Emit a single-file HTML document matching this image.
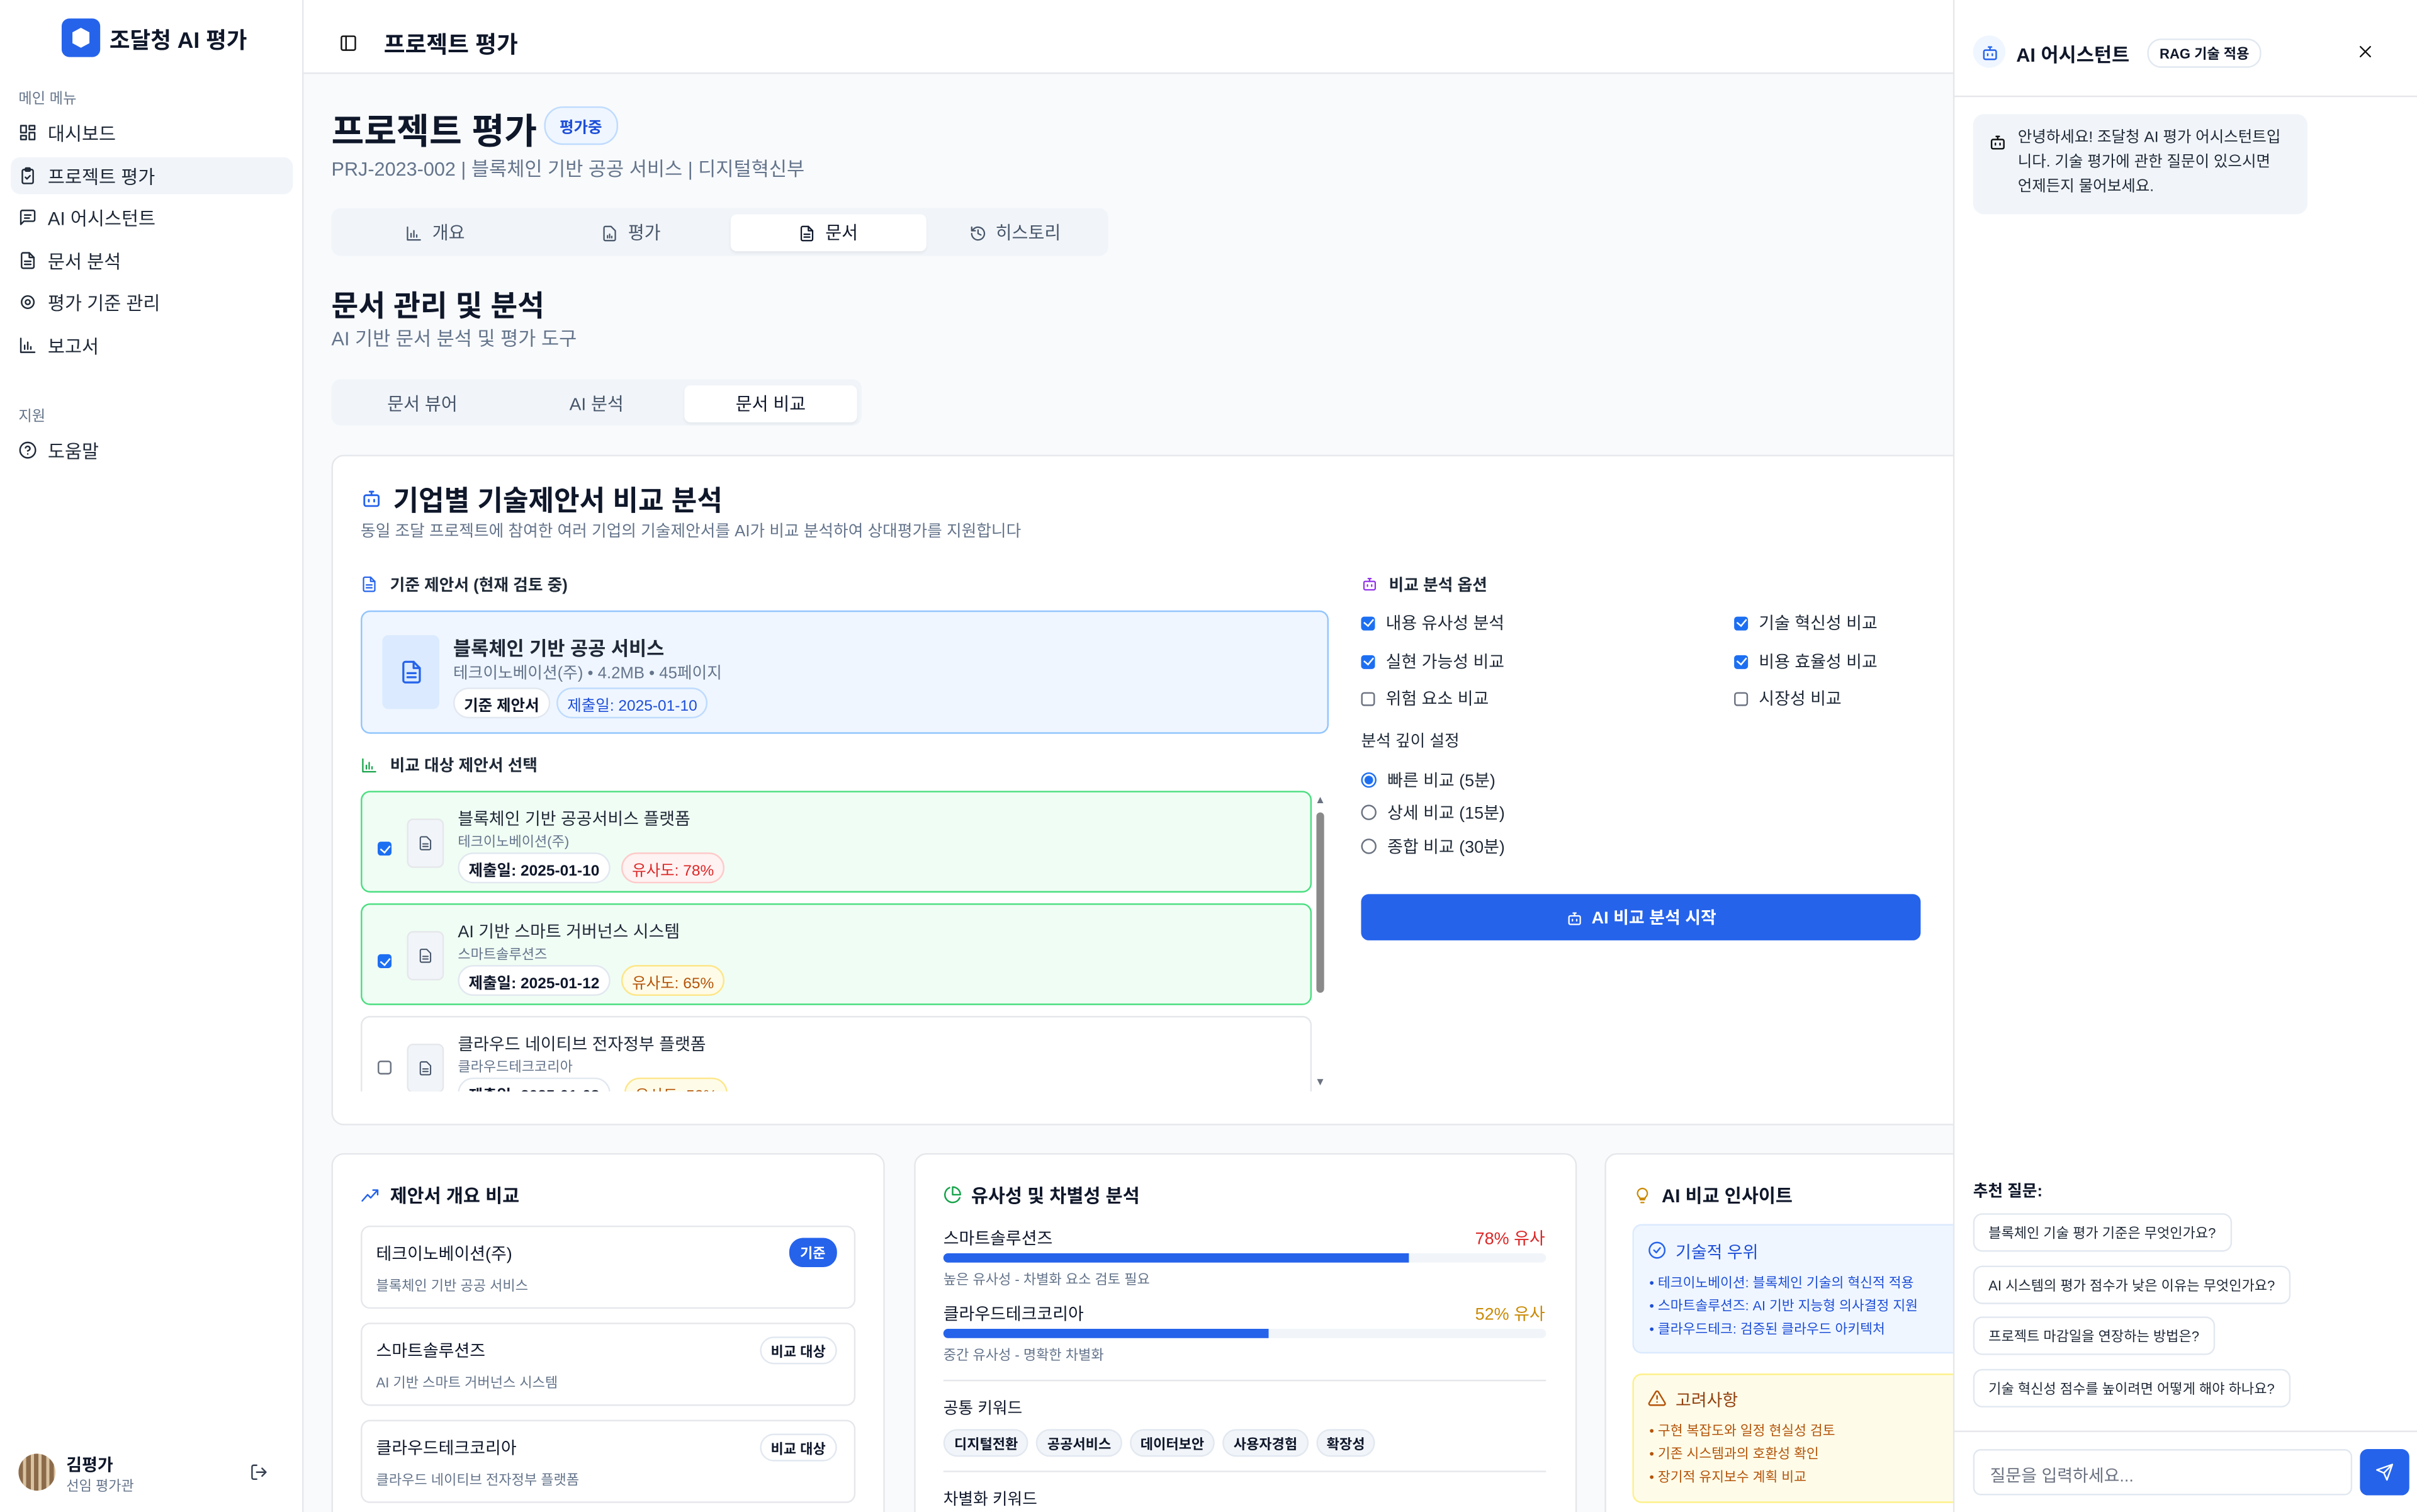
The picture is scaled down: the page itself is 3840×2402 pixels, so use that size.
<!DOCTYPE html>
<html><head><meta charset="utf-8">
<style>
*{box-sizing:border-box;margin:0;padding:0}
html,body{width:3840px;height:2401px;overflow:hidden;background:#f8fafc}
body{font-family:"Liberation Sans","Noto Sans CJK KR",sans-serif;color:#0f172a}
#s{position:absolute;left:0;top:0;width:1568px;height:981px;transform:scale(2.44898);transform-origin:0 0;background:#f8fafc;overflow:hidden}
.a{position:absolute}
svg{display:block}
.ic{fill:none;stroke:currentColor;stroke-width:2;stroke-linecap:round;stroke-linejoin:round}
.side{left:0;top:0;width:197px;height:981px;background:#fff;border-right:1px solid #e5e7eb}
.nav{position:absolute;left:7px;width:183px;height:24px;border-radius:6px;display:flex;align-items:center;padding-left:5px;font-size:12px;color:#1f2937;gap:7px}
.nav.act{background:#f1f5f9}
.lbl{font-size:9.5px;color:#64748b}
.tabs{background:#f1f5f9;border-radius:6px}
.tab{position:absolute;top:4px;height:24px;border-radius:4px;display:flex;align-items:center;justify-content:center;gap:6px;font-size:11.5px;color:#475569}
.tab.on{background:#fff;color:#0f172a;box-shadow:0 1px 2px rgba(0,0,0,.06)}
.card{background:#fff;border:1px solid #e5e7eb;border-radius:8px}
.pill{display:inline-block;font-size:10px;border:1px solid #e2e8f0;border-radius:10px;padding:1.5px 6px;font-weight:bold;background:#fff}
.cb{width:9px;height:9px;border-radius:2px;background:#1d6ff2;display:inline-block;position:relative}
.cb:after{content:"";position:absolute;left:2.8px;top:.8px;width:2.5px;height:5px;border:solid #fff;border-width:0 1.3px 1.3px 0;transform:rotate(40deg)}
.cb0{width:9px;height:9px;border-radius:2px;border:1px solid #6b7280;display:inline-block;background:#fff}
.opt{position:absolute;font-size:11px;display:flex;align-items:center;gap:7px;color:#1f2937}
.rd{width:10px;height:10px;border-radius:50%;border:1px solid #6b7280;display:inline-block;background:#fff}
.rd.on{border:1px solid #1d6ff2;background:radial-gradient(circle,#1d6ff2 0 2.6px,#fff 3px)}
.prop{position:absolute;left:234px;width:617px;height:66px;border-radius:6px}
.docico{position:absolute;left:29px;top:17px;width:24px;height:32px;background:#f1f5f9;border-radius:4px;border:1px solid #e5e7eb;color:#475569;display:flex;align-items:center;justify-content:center}
.sq{position:absolute;font-size:9px;color:#1f2937;background:#fff;border:1px solid #e2e8f0;border-radius:6px;padding:5px 9px}
</style></head><body><div id="s">

<div class="a side">
  <div class="a" style="left:40px;top:12px;width:25px;height:25px;border-radius:5px;background:#2563eb;display:flex;align-items:center;justify-content:center">
    <svg width="13" height="15" viewBox="0 0 13 15"><path d="M6.5 1 L12 4 V11 L6.5 14 L1 11 V4Z" fill="#fff"/></svg></div>
  <div class="a" style="left:71px;top:15px;font-size:14.5px;font-weight:bold">조달청 AI 평가</div>
  <div class="a lbl" style="left:12px;top:56px">메인 메뉴</div>
  <div class="nav" style="top:74px"><svg class="ic" width="12" height="12" viewBox="0 0 24 24"><rect x="3" y="3" width="7" height="9"/><rect x="14" y="3" width="7" height="5"/><rect x="14" y="12" width="7" height="9"/><rect x="3" y="16" width="7" height="5"/></svg>대시보드</div>
  <div class="nav act" style="top:102px"><svg class="ic" width="12" height="12" viewBox="0 0 24 24"><rect x="5" y="4" width="14" height="18" rx="2"/><rect x="9" y="2" width="6" height="4" rx="1"/><path d="M9 14l2 2 4-4"/></svg>프로젝트 평가</div>
  <div class="nav" style="top:129px"><svg class="ic" width="12" height="12" viewBox="0 0 24 24"><path d="M21 15a2 2 0 0 1-2 2H7l-4 4V5a2 2 0 0 1 2-2h14a2 2 0 0 1 2 2z"/><path d="M8 9h8M8 13h6"/></svg>AI 어시스턴트</div>
  <div class="nav" style="top:157px"><svg class="ic" width="12" height="12" viewBox="0 0 24 24"><path d="M14 2H6a2 2 0 0 0-2 2v16a2 2 0 0 0 2 2h12a2 2 0 0 0 2-2V8z"/><path d="M14 2v6h6M8 13h8M8 17h8"/></svg>문서 분석</div>
  <div class="nav" style="top:184px"><svg class="ic" width="12" height="12" viewBox="0 0 24 24"><circle cx="12" cy="12" r="3"/><circle cx="12" cy="12" r="8"/></svg>평가 기준 관리</div>
  <div class="nav" style="top:212px"><svg class="ic" width="12" height="12" viewBox="0 0 24 24"><path d="M3 3v18h18M8 17v-5M12 17V8M16 17v-3"/></svg>보고서</div>
  <div class="a lbl" style="left:12px;top:262px">지원</div>
  <div class="nav" style="top:280px"><svg class="ic" width="12" height="12" viewBox="0 0 24 24"><circle cx="12" cy="12" r="10"/><path d="M9.1 9a3 3 0 0 1 5.8 1c0 2-3 3-3 3M12 17h.01"/></svg>도움말</div>
  <div class="a" style="left:12px;top:943px;width:24px;height:24px;border-radius:50%;background:repeating-linear-gradient(90deg,#8b6b4a 0 3px,#d9c2a0 3px 5px)"></div>
  <div class="a" style="left:43px;top:942px;font-size:11px;font-weight:bold">김평가</div>
  <div class="a" style="left:43px;top:957px;font-size:9px;color:#64748b">선임 평가관</div>
  <svg class="a ic" style="left:162px;top:949px;color:#374151" width="12" height="12" viewBox="0 0 24 24"><path d="M9 21H5a2 2 0 0 1-2-2V5a2 2 0 0 1 2-2h4M16 17l5-5-5-5M21 12H9"/></svg>
</div>

<div class="a" style="left:197px;top:0;width:1071px;height:48px;background:#fff;border-bottom:1px solid #e5e7eb"></div>
<svg class="a ic" style="left:220px;top:22px;color:#111" width="12" height="12" viewBox="0 0 24 24"><rect x="3" y="3" width="18" height="18" rx="2"/><path d="M9 3v18"/></svg>
<div class="a" style="left:249px;top:18px;font-size:15px;font-weight:bold">프로젝트 평가</div>

<div class="a" style="left:215px;top:66px;font-size:23px;font-weight:bold">프로젝트 평가</div>
<div class="a" style="left:353px;top:69px;background:#eff6ff;border:1px solid #bfdbfe;color:#1d4ed8;border-radius:12px;font-size:10px;font-weight:bold;padding:4px 9px">평가중</div>
<div class="a" style="left:215px;top:99px;font-size:12.5px;color:#64748b">PRJ-2023-002 | 블록체인 기반 공공 서비스 | 디지털혁신부</div>

<div class="a tabs" style="left:215px;top:135px;width:504px;height:31px">
  <div class="tab" style="left:4px;width:127px"><svg class="ic" width="11" height="11" viewBox="0 0 24 24"><path d="M3 3v18h18M8 17v-5M12 17V8M16 17v-3"/></svg>개요</div>
  <div class="tab" style="left:131px;width:127px"><svg class="ic" width="11" height="11" viewBox="0 0 24 24"><path d="M14 2H6a2 2 0 0 0-2 2v16a2 2 0 0 0 2 2h12a2 2 0 0 0 2-2V8z"/><path d="M9 18v-3M12 18v-5M15 18v-2"/></svg>평가</div>
  <div class="tab on" style="left:259px;width:127px"><svg class="ic" width="11" height="11" viewBox="0 0 24 24"><path d="M14 2H6a2 2 0 0 0-2 2v16a2 2 0 0 0 2 2h12a2 2 0 0 0 2-2V8z"/><path d="M14 2v6h6M8 13h8M8 17h8"/></svg>문서</div>
  <div class="tab" style="left:387px;width:113px"><svg class="ic" width="11" height="11" viewBox="0 0 24 24"><path d="M3 12a9 9 0 1 0 3-6.7L3 8M3 3v5h5M12 7v5l4 2"/></svg>히스토리</div>
</div>

<div class="a" style="left:215px;top:184px;font-size:19px;font-weight:bold">문서 관리 및 분석</div>
<div class="a" style="left:215px;top:209px;font-size:12.5px;color:#64748b">AI 기반 문서 분석 및 평가 도구</div>

<div class="a tabs" style="left:215px;top:246px;width:344px;height:30px">
  <div class="tab" style="left:4px;width:110px">문서 뷰어</div>
  <div class="tab" style="left:117px;width:110px">AI 분석</div>
  <div class="tab on" style="left:229px;width:112px;color:#0f172a">문서 비교</div>
</div>

<div class="a card" style="left:215px;top:295px;width:1100px;height:435px"></div>
<svg class="a ic" style="left:234px;top:316px;color:#2563eb" width="14" height="14" viewBox="0 0 24 24"><rect x="4" y="9" width="16" height="12" rx="2"/><path d="M12 9V5M10 5h4M9 14v2M15 14v2"/></svg>
<div class="a" style="left:255px;top:311px;font-size:18px;font-weight:bold">기업별 기술제안서 비교 분석</div>
<div class="a" style="left:234px;top:337px;font-size:10.5px;color:#64748b">동일 조달 프로젝트에 참여한 여러 기업의 기술제안서를 AI가 비교 분석하여 상대평가를 지원합니다</div>

<svg class="a ic" style="left:234px;top:373px;color:#2563eb" width="11" height="12" viewBox="0 0 24 24"><path d="M14 2H6a2 2 0 0 0-2 2v16a2 2 0 0 0 2 2h12a2 2 0 0 0 2-2V8z"/><path d="M14 2v6h6M8 13h8M8 17h8"/></svg>
<div class="a" style="left:253px;top:372px;font-size:10.5px;font-weight:bold;color:#1f2937">기준 제안서 (현재 검토 중)</div>

<div class="a" style="left:234px;top:396px;width:628px;height:80px;background:#eff6ff;border:1.5px solid #93c5fd;border-radius:6px">
  <div class="a" style="left:13px;top:15px;width:37px;height:48px;background:#dbeafe;border-radius:4px;display:flex;align-items:center;justify-content:center;color:#2563eb"><svg class="ic" width="16" height="18" viewBox="0 0 24 24"><path d="M14 2H6a2 2 0 0 0-2 2v16a2 2 0 0 0 2 2h12a2 2 0 0 0 2-2V8z"/><path d="M14 2v6h6M8 13h8M8 17h8"/></svg></div>
  <div class="a" style="left:59px;top:13px;font-size:12.5px;font-weight:bold;color:#1f2937">블록체인 기반 공공 서비스</div>
  <div class="a" style="left:59px;top:32px;font-size:10.5px;color:#64748b">테크이노베이션(주) • 4.2MB • 45페이지</div>
  <div class="a pill" style="left:59px;top:49px">기준 제안서</div>
  <div class="a pill" style="left:126px;top:49px;color:#1d4ed8;border-color:#bfdbfe;background:#eff6ff;font-weight:normal">제출일: 2025-01-10</div>
</div>

<svg class="a ic" style="left:234px;top:491px;color:#16a34a" width="11" height="11" viewBox="0 0 24 24"><path d="M3 3v18h18M8 17v-5M12 17V8M16 17v-3"/></svg>
<div class="a" style="left:253px;top:489px;font-size:10.5px;font-weight:bold;color:#1f2937">비교 대상 제안서 선택</div>

<div class="a" style="left:230px;top:510px;width:636px;height:198px;overflow:hidden">
 <div class="prop" style="left:4px;top:3px;background:#f0fdf4;border:1px solid #4ade80">
  <span class="a cb" style="left:10px;top:28px"></span>
  <div class="docico"><svg class="ic" width="10" height="12" viewBox="0 0 24 24"><path d="M14 2H6a2 2 0 0 0-2 2v16a2 2 0 0 0 2 2h12a2 2 0 0 0 2-2V8z"/><path d="M8 13h8M8 17h8"/></svg></div>
  <div class="a" style="left:62px;top:9px;font-size:11px;color:#1f2937">블록체인 기반 공공서비스 플랫폼</div>
  <div class="a" style="left:62px;top:25px;font-size:9px;color:#64748b">테크이노베이션(주)</div>
  <div class="a pill" style="left:62px;top:39px">제출일: 2025-01-10</div>
  <div class="a pill" style="left:168px;top:39px;color:#dc2626;background:#fef2f2;border-color:#fecaca;font-weight:normal">유사도: 78%</div>
 </div>
 <div class="prop" style="left:4px;top:76px;background:#f0fdf4;border:1px solid #4ade80">
  <span class="a cb" style="left:10px;top:28px"></span>
  <div class="docico"><svg class="ic" width="10" height="12" viewBox="0 0 24 24"><path d="M14 2H6a2 2 0 0 0-2 2v16a2 2 0 0 0 2 2h12a2 2 0 0 0 2-2V8z"/><path d="M8 13h8M8 17h8"/></svg></div>
  <div class="a" style="left:62px;top:9px;font-size:11px;color:#1f2937">AI 기반 스마트 거버넌스 시스템</div>
  <div class="a" style="left:62px;top:25px;font-size:9px;color:#64748b">스마트솔루션즈</div>
  <div class="a pill" style="left:62px;top:39px">제출일: 2025-01-12</div>
  <div class="a pill" style="left:168px;top:39px;color:#b45309;background:#fefce8;border-color:#fde68a;font-weight:normal">유사도: 65%</div>
 </div>
 <div class="prop" style="left:4px;top:149px;background:#fff;border:1px solid #e5e7eb">
  <span class="a cb0" style="left:10px;top:28px"></span>
  <div class="docico"><svg class="ic" width="10" height="12" viewBox="0 0 24 24"><path d="M14 2H6a2 2 0 0 0-2 2v16a2 2 0 0 0 2 2h12a2 2 0 0 0 2-2V8z"/><path d="M8 13h8M8 17h8"/></svg></div>
  <div class="a" style="left:62px;top:9px;font-size:11px;color:#1f2937">클라우드 네이티브 전자정부 플랫폼</div>
  <div class="a" style="left:62px;top:25px;font-size:9px;color:#64748b">클라우드테크코리아</div>
  <div class="a pill" style="left:62px;top:39px">제출일: 2025-01-08</div>
  <div class="a pill" style="left:170px;top:39px;color:#b45309;background:#fefce8;border-color:#fde68a;font-weight:normal">유사도: 52%</div>
 </div>
</div>
<div class="a" style="left:853px;top:516px;font-size:7px;color:#6b7280">▲</div>
<div class="a" style="left:854px;top:527px;width:5px;height:117px;border-radius:3px;background:#8a8a8a"></div>
<div class="a" style="left:853px;top:699px;font-size:7px;color:#6b7280">▼</div>

<svg class="a ic" style="left:883px;top:373px;color:#9333ea" width="11" height="11" viewBox="0 0 24 24"><rect x="4" y="9" width="16" height="12" rx="2"/><path d="M12 9V5M10 5h4M9 14v2M15 14v2"/></svg>
<div class="a" style="left:901px;top:372px;font-size:10.5px;font-weight:bold;color:#1f2937">비교 분석 옵션</div>
<div class="opt" style="left:883px;top:396px"><span class="cb"></span>내용 유사성 분석</div>
<div class="opt" style="left:1125px;top:396px"><span class="cb"></span>기술 혁신성 비교</div>
<div class="opt" style="left:883px;top:421px"><span class="cb"></span>실현 가능성 비교</div>
<div class="opt" style="left:1125px;top:421px"><span class="cb"></span>비용 효율성 비교</div>
<div class="opt" style="left:883px;top:445px"><span class="cb0"></span>위험 요소 비교</div>
<div class="opt" style="left:1125px;top:445px"><span class="cb0"></span>시장성 비교</div>
<div class="a" style="left:883px;top:473px;font-size:10.5px;color:#1f2937">분석 깊이 설정</div>
<div class="opt" style="left:883px;top:498px"><span class="rd on"></span>빠른 비교 (5분)</div>
<div class="opt" style="left:883px;top:519px"><span class="rd"></span>상세 비교 (15분)</div>
<div class="opt" style="left:883px;top:541px"><span class="rd"></span>종합 비교 (30분)</div>
<div class="a" style="left:883px;top:580px;width:363px;height:30px;background:#2563eb;border-radius:5px;color:#fff;font-size:11px;font-weight:bold;display:flex;align-items:center;justify-content:center;gap:6px"><svg class="ic" width="11" height="11" viewBox="0 0 24 24"><rect x="4" y="9" width="16" height="12" rx="2"/><path d="M12 9V5M10 5h4M9 14v2M15 14v2"/></svg>AI 비교 분석 시작</div>

<div class="a card" style="left:215px;top:748px;width:359px;height:260px"></div>
<svg class="a ic" style="left:234px;top:770px;color:#2563eb" width="12" height="10" viewBox="0 0 24 20"><path d="M2 18l7-8 4 4 9-10M16 4h6v6"/></svg>
<div class="a" style="left:253px;top:767px;font-size:12px;font-weight:bold">제안서 개요 비교</div>
<div class="a card" style="left:234px;top:795px;width:321px;height:54px;border-radius:6px"></div>
<div class="a" style="left:244px;top:805px;font-size:11px">테크이노베이션(주)</div>
<div class="a" style="left:244px;top:827px;font-size:9px;color:#64748b">블록체인 기반 공공 서비스</div>
<div class="a" style="left:512px;top:803px;background:#2563eb;color:#fff;font-size:9px;font-weight:bold;border-radius:9px;padding:3px 7px">기준</div>
<div class="a card" style="left:234px;top:858px;width:321px;height:54px;border-radius:6px"></div>
<div class="a" style="left:244px;top:868px;font-size:11px">스마트솔루션즈</div>
<div class="a" style="left:244px;top:890px;font-size:9px;color:#64748b">AI 기반 스마트 거버넌스 시스템</div>
<div class="a pill" style="left:493px;top:867px;font-size:9px">비교 대상</div>
<div class="a card" style="left:234px;top:921px;width:321px;height:54px;border-radius:6px"></div>
<div class="a" style="left:244px;top:931px;font-size:11px">클라우드테크코리아</div>
<div class="a" style="left:244px;top:953px;font-size:9px;color:#64748b">클라우드 네이티브 전자정부 플랫폼</div>
<div class="a pill" style="left:493px;top:930px;font-size:9px">비교 대상</div>

<div class="a card" style="left:593px;top:748px;width:430px;height:260px"></div>
<svg class="a ic" style="left:612px;top:769px;color:#16a34a" width="12" height="12" viewBox="0 0 24 24"><path d="M21.2 15.9A10 10 0 1 1 8 2.8"/><path d="M22 12A10 10 0 0 0 12 2v10z"/></svg>
<div class="a" style="left:630px;top:767px;font-size:12px;font-weight:bold">유사성 및 차별성 분석</div>
<div class="a" style="left:612px;top:795px;font-size:11px">스마트솔루션즈</div>
<div class="a" style="left:957px;top:795px;font-size:11px;color:#dc2626">78% 유사</div>
<div class="a" style="left:612px;top:813px;width:391px;height:6px;background:#f1f5f9;border-radius:3px"><div style="width:302px;height:6px;background:#2563eb;border-radius:3px 0 0 3px"></div></div>
<div class="a" style="left:612px;top:823px;font-size:9px;color:#64748b">높은 유사성 - 차별화 요소 검토 필요</div>
<div class="a" style="left:612px;top:844px;font-size:11px">클라우드테크코리아</div>
<div class="a" style="left:957px;top:844px;font-size:11px;color:#ca8a04">52% 유사</div>
<div class="a" style="left:612px;top:862px;width:391px;height:6px;background:#f1f5f9;border-radius:3px"><div style="width:211px;height:6px;background:#2563eb;border-radius:3px 0 0 3px"></div></div>
<div class="a" style="left:612px;top:872px;font-size:9px;color:#64748b">중간 유사성 - 명확한 차별화</div>
<div class="a" style="left:612px;top:895px;width:391px;border-top:1px solid #e5e7eb"></div>
<div class="a" style="left:612px;top:906px;font-size:10.5px">공통 키워드</div>
<div class="a" style="left:612px;top:927px;display:flex;gap:5px">
<span class="pill" style="background:#f1f5f9;font-size:9px">디지털전환</span><span class="pill" style="background:#f1f5f9;font-size:9px">공공서비스</span><span class="pill" style="background:#f1f5f9;font-size:9px">데이터보안</span><span class="pill" style="background:#f1f5f9;font-size:9px">사용자경험</span><span class="pill" style="background:#f1f5f9;font-size:9px">확장성</span></div>
<div class="a" style="left:612px;top:954px;width:391px;border-top:1px solid #e5e7eb"></div>
<div class="a" style="left:612px;top:965px;font-size:10.5px">차별화 키워드</div>

<div class="a card" style="left:1041px;top:748px;width:300px;height:260px"></div>
<svg class="a ic" style="left:1060px;top:769px;color:#ca8a04" width="11" height="13" viewBox="0 0 24 24"><path d="M9 18h6M10 22h4M12 2a7 7 0 0 0-4 12.7V16h8v-1.3A7 7 0 0 0 12 2z"/></svg>
<div class="a" style="left:1078px;top:767px;font-size:12px;font-weight:bold">AI 비교 인사이트</div>
<div class="a" style="left:1059px;top:794px;width:240px;height:84px;background:#eff6ff;border:1px solid #dbeafe;border-radius:6px"></div>
<svg class="a ic" style="left:1069px;top:805px;color:#2563eb" width="12" height="12" viewBox="0 0 24 24"><circle cx="12" cy="12" r="10"/><path d="M8 12l3 3 5-6"/></svg>
<div class="a" style="left:1087px;top:804px;font-size:11px;color:#1d4ed8">기술적 우위</div>
<div class="a" style="left:1070px;top:825px;font-size:8.8px;color:#1d4ed8;line-height:15px">• 테크이노베이션: 블록체인 기술의 혁신적 적용<br>• 스마트솔루션즈: AI 기반 지능형 의사결정 지원<br>• 클라우드테크: 검증된 클라우드 아키텍처</div>
<div class="a" style="left:1059px;top:891px;width:240px;height:84px;background:#fefce8;border:1px solid #fef08a;border-radius:6px"></div>
<svg class="a ic" style="left:1069px;top:901px;color:#b45309" width="12" height="12" viewBox="0 0 24 24"><path d="M10.3 3.9L1.8 18a2 2 0 0 0 1.7 3h17a2 2 0 0 0 1.7-3L13.7 3.9a2 2 0 0 0-3.4 0zM12 9v4M12 17h.01"/></svg>
<div class="a" style="left:1087px;top:900px;font-size:11px;color:#92400e">고려사항</div>
<div class="a" style="left:1070px;top:921px;font-size:8.8px;color:#b45309;line-height:15px">• 구현 복잡도와 일정 현실성 검토<br>• 기존 시스템과의 호환성 확인<br>• 장기적 유지보수 계획 비교</div>

<div class="a" style="left:1267px;top:0;width:301px;height:981px;background:#fff;border-left:1px solid #e5e7eb"></div>
<div class="a" style="left:1280px;top:23px;width:21px;height:21px;border-radius:50%;background:#eff6ff;display:flex;align-items:center;justify-content:center;color:#2563eb"><svg class="ic" width="12" height="12" viewBox="0 0 24 24"><rect x="4" y="9" width="16" height="12" rx="2"/><path d="M12 9V5M10 5h4M9 14v2M15 14v2"/></svg></div>
<div class="a" style="left:1308px;top:25px;font-size:12.5px;font-weight:bold">AI 어시스턴트</div>
<div class="a" style="left:1393px;top:25px;font-size:9px;font-weight:bold;border:1px solid #e2e8f0;border-radius:9px;padding:2px 7px">RAG 기술 적용</div>
<svg class="a ic" style="left:1529px;top:28px;color:#111" width="11" height="11" viewBox="0 0 24 24"><path d="M5 5l14 14M19 5L5 19"/></svg>
<div class="a" style="left:1267px;top:62px;width:301px;border-top:1px solid #e5e7eb"></div>
<div class="a" style="left:1280px;top:74px;width:217px;height:65px;background:#f1f5f9;border-radius:7px"></div>
<svg class="a ic" style="left:1290px;top:86px;color:#111" width="12" height="12" viewBox="0 0 24 24"><rect x="4" y="9" width="16" height="12" rx="2"/><path d="M12 9V5M10 5h4M9 14v2M15 14v2"/></svg>
<div class="a" style="left:1309px;top:82px;width:172px;font-size:10px;line-height:16px;color:#1f2937">안녕하세요! 조달청 AI 평가 어시스턴트입니다. 기술 평가에 관한 질문이 있으시면 언제든지 물어보세요.</div>
<div class="a" style="left:1280px;top:765px;font-size:10.5px;font-weight:bold">추천 질문:</div>
<div class="sq" style="left:1280px;top:787px">블록체인 기술 평가 기준은 무엇인가요?</div>
<div class="sq" style="left:1280px;top:821px">AI 시스템의 평가 점수가 낮은 이유는 무엇인가요?</div>
<div class="sq" style="left:1280px;top:854px">프로젝트 마감일을 연장하는 방법은?</div>
<div class="sq" style="left:1280px;top:888px">기술 혁신성 점수를 높이려면 어떻게 해야 하나요?</div>
<div class="a" style="left:1267px;top:928px;width:301px;border-top:1px solid #e5e7eb"></div>
<div class="a" style="left:1280px;top:940px;width:246px;height:30px;border:1px solid #e2e8f0;border-radius:5px;font-size:11px;color:#6b7280;padding:8px 10px">질문을 입력하세요...</div>
<div class="a" style="left:1531px;top:940px;width:32px;height:30px;background:#2563eb;border-radius:5px;display:flex;align-items:center;justify-content:center;color:#fff"><svg class="ic" width="12" height="12" viewBox="0 0 24 24"><path d="M22 2L11 13M22 2l-7 20-4-9-9-4z"/></svg></div>

</div></body></html>
